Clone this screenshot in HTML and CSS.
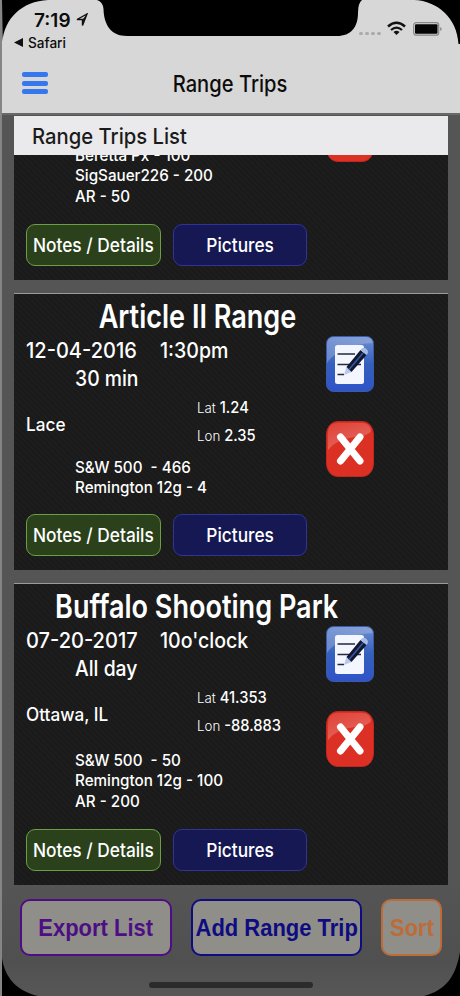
FILE: index.html
```html
<!DOCTYPE html>
<html lang="en">
<head>
    <meta charset="UTF-8">
    <meta name="viewport" content="width=device-width, initial-scale=1.0">
    <title>Range Trips</title>
    <link rel="stylesheet" href="styles.css">
</head>
<body>
    <!-- Icons shared by the cards -->
    <svg width="0" height="0" class="defs">
        <defs>
            <linearGradient id="blue" x1="0" y1="0" x2="0" y2="1">
                <stop offset="0" stop-color="#6f8fd0"/>
                <stop offset="0.5" stop-color="#3460bd"/>
                <stop offset="1" stop-color="#3053c8"/>
            </linearGradient>
            <linearGradient id="shine" x1="0" y1="0" x2="0.6" y2="1">
                <stop offset="0" stop-color="#fff" stop-opacity="0.15"/>
                <stop offset="1" stop-color="#fff" stop-opacity="0.5"/>
            </linearGradient>
        </defs>
        <symbol id="edit" viewBox="0 0 48 56">
            <rect x="0.5" y="0.5" width="47" height="55" rx="7" fill="url(#blue)" stroke="#3a5ba8"/>
            <path d="M1 27V8Q1 1 8 1H40Q46 1 47 7Q28 8 17 14Q5 20 1 27Z" fill="url(#shine)" opacity="0.6"/>
            <rect x="9" y="9" width="29" height="39" rx="2.5" fill="#f3f6ff"/>
            <path d="M11.500 18H29M11.500 28.500H25M11.500 38.500H18M31 28.500H35" stroke="#252a3c" stroke-width="1.600"/>
            <path d="M18 39L20.500 31L25.500 36Z" fill="#b9c8ef"/>
            <path d="M20.500 31L34.500 14L40.500 19L25.500 36Z" fill="#11172f"/>
            <path d="M23 33.500L37 17" stroke="#3559a8" stroke-width="1.500"/>
            <path d="M34.500 14Q37 10 40.500 13Q43.500 16 40.500 19Z" fill="#a9bbe2"/>
        </symbol>
        <symbol id="delete" viewBox="0 0 48 56">
            <rect x="0.5" y="0.5" width="47" height="55" rx="11" ry="13" fill="#dc3024" stroke="#c32820"/>
            <path d="M2 29V13Q2 2 12 2H36Q44 2 45 10Q42 15 29 16Q10 18 2 29Z" fill="url(#shine)" opacity="0.55"/>
            <path d="M14.500 16L34 40M34 16L14.500 40" stroke="#fff" stroke-width="7" stroke-linecap="round"/>
        </symbol>
    </svg>

    <div class="phone">
        <header>
            <div class="status">
                <div class="clock"><span class="time">7:19</span>
                    <svg width="12" height="14" viewBox="0 0 12 14"><path d="M1 6.500L11 1L6.500 12.500V6.500Z" fill="none" stroke="#111" stroke-width="1.400"/><path d="M11 1L6.500 6.500V12.500Z" fill="#111"/></svg>
                </div>
                <div class="back"><svg width="9" height="9" viewBox="0 0 9 9"><path d="M0 4.500L9 0V9Z" fill="#111"/></svg><span>Safari</span></div>
            </div>
            <div class="indicators">
                <i class="dot"></i><i class="dot"></i><i class="dot"></i><i class="dot"></i>
                <svg class="wifi" width="19" height="15" viewBox="0 0 19 15">
                    <path d="M1 5.500Q9.500 -2 18 5.500" fill="none" stroke="#111" stroke-width="2.500"/>
                    <path d="M4 9Q9.500 4.200 15 9" fill="none" stroke="#111" stroke-width="2.300"/>
                    <path d="M9.500 14L6.500 11Q9.500 8.600 12.500 11Z" fill="#111"/>
                </svg>
                <svg width="30" height="14" viewBox="0 0 30 14">
                    <rect x="0.7" y="0.7" width="25" height="12.500" rx="2.500" fill="none" stroke="#888" stroke-width="1.200"/>
                    <rect x="2" y="2.200" width="22.500" height="9.500" rx="1" fill="#050505"/>
                    <path d="M27.500 5Q29.500 7 27.500 9Z" fill="#555"/>
                </svg>
            </div>
            <div class="nav">
                <div class="menu"><i></i><i></i><i></i></div>
                <h1><span>Range Trips</span></h1>
            </div>
        </header>

        <h2><span>Range Trips List</span></h2>

        <div class="list">
            <div class="card tall scrolled">
                <div class="body">
                    <div class="info">
                        <div class="guns"><p>Beretta Px - 100</p><p>SigSauer226 - 200</p><p>AR - 50</p></div>
                    </div>
                    <div class="icons"><svg><use href="#delete"/></svg></div>
                </div>
                <div class="buttons">
                    <div class="btn notes"><span>Notes / Details</span></div>
                    <div class="btn pics"><span>Pictures</span></div>
                </div>
            </div>

            <div class="card">
                <h3><span>Article II Range</span></h3>
                <div class="body">
                    <div class="info">
                        <div class="when"><span class="date">12-04-2016</span><span>1:30pm</span></div>
                        <div class="length"><span>30 min</span></div>
                        <div class="where">
                            <div class="place"><span>Lace</span></div>
                            <div class="coords"><p><small>Lat</small> 1.24</p><p><small>Lon</small> 2.35</p></div>
                        </div>
                        <div class="guns"><p>S&amp;W 500&nbsp; - 466</p><p>Remington 12g - 4</p></div>
                    </div>
                    <div class="icons"><svg><use href="#edit"/></svg><svg><use href="#delete"/></svg></div>
                </div>
                <div class="buttons">
                    <div class="btn notes"><span>Notes / Details</span></div>
                    <div class="btn pics"><span>Pictures</span></div>
                </div>
            </div>

            <div class="card tall">
                <h3><span>Buffalo Shooting Park</span></h3>
                <div class="body">
                    <div class="info">
                        <div class="when"><span class="date">07-20-2017</span><span>10o'clock</span></div>
                        <div class="length"><span>All day</span></div>
                        <div class="where">
                            <div class="place"><span>Ottawa, IL</span></div>
                            <div class="coords"><p><small>Lat</small> 41.353</p><p><small>Lon</small> -88.883</p></div>
                        </div>
                        <div class="guns"><p>S&amp;W 500&nbsp; - 50</p><p>Remington 12g - 100</p><p>AR - 200</p></div>
                    </div>
                    <div class="icons"><svg><use href="#edit"/></svg><svg><use href="#delete"/></svg></div>
                </div>
                <div class="buttons">
                    <div class="btn notes"><span>Notes / Details</span></div>
                    <div class="btn pics"><span>Pictures</span></div>
                </div>
            </div>
        </div>

        <footer>
            <div class="action export"><span>Export List</span></div>
            <div class="action add"><span>Add Range Trip</span></div>
            <div class="action sort"><span>Sort</span></div>
        </footer>
        <div class="home"></div>
    </div>

    <!-- Notch and rounded corners of the phone -->
    <svg class="frame" width="460" height="996" viewBox="0 0 460 996">
        <path d="M97 0Q103 2 103.500 9C104 25 111 36 127 36H337C351 36 358 27 358 13Q358 3 362 0Z"/>
        <path d="M2 0H48C22 1 4 19 2.500 42Z"/>
        <path d="M460 0H414C438 1 457 18 458.500 44H460Z"/>
        <path d="M2 958C5 978 17 991 38 996H2Z"/>
        <path d="M460 952C456 975 447 990 424 996H460Z"/>
    </svg>
</body>
</html>
```
FILE: styles.css
```css
* {
    box-sizing: border-box;
}

body {
    margin: 0;
    background: #555;
    font-family: Inter, "Liberation Sans", sans-serif;
    font-weight: 500;
    color: #fff;
}

h1, h2, h3, p {
    margin: 0;
    font-weight: 500;
}

span, p {
    white-space: nowrap;
}

.defs {
    position: absolute;
}

.phone {
    width: 460px;
    height: 996px;
    overflow: hidden;
    border-left: 2px solid #858585;
    background: linear-gradient(#555 880px, #505050 960px, #575757);
}

/* Top bar */
header {
    position: relative;
    height: 115px;
    margin-bottom: 1px;
    background: #d7d7d7;
    border-bottom: 2px solid #686868;
    color: #0c0c0c;
}

.status {
    height: 54px;
    padding: 9px 0 0 12px;
}

.clock {
    display: flex;
    align-items: center;
    height: 22px;
    padding-left: 20px;
}

.clock svg {
    margin-left: 1px;
}

.time {
    width: 41px;
    font-size: 19px;
    font-weight: 600;
}

.back {
    display: flex;
    align-items: center;
    height: 22px;
    font-size: 14px;
}

.back span {
    margin-left: 5px;
    transform: scaleX(0.97);
    transform-origin: left;
}

.indicators {
    position: absolute;
    top: 21px;
    right: 17px;
    display: flex;
    align-items: center;
}

.dot {
    width: 4px;
    height: 3px;
    margin: 10px 2px 0 0;
    border-radius: 2px;
    background: #aaa;
}

.wifi {
    margin: 0 7px 0 4px;
}

.nav {
    height: 60px;
}

.menu {
    float: left;
    padding: 18px 0 0 20px;
}

.menu i {
    display: block;
    width: 26px;
    height: 5px;
    margin-bottom: 3.5px;
    border-radius: 2px;
    background: #3478f0;
}

h1 {
    display: flex;
    justify-content: center;
    margin: 0 2px 0 0;
    height: 60px;
    font-size: 22.5px;
    line-height: 60px;
}

h1 span {
    margin-right: 45px;
    transform: scaleX(0.895);
}

h2 {
    width: 434px;
    height: 39px;
    margin-left: 12px;
    padding-left: 18px;
    background: #eaeaec;
    color: #1b1b1b;
    font-size: 22px;
    line-height: 41px;
}

h2 span {
    display: inline-block;
    transform: scaleX(0.92);
    transform-origin: left;
}

/* Trips */
.list {
    width: 434px;
    height: 730px;
    margin-left: 12px;
    overflow: hidden;
}

.card {
    display: flex;
    flex-direction: column;
    height: 277px;
    margin-bottom: 13px;
    padding: 0 12px 14px;
    border-top: 1px solid #9a9a9a;
    background: repeating-linear-gradient(45deg, #1a1a1a 0 2px, #1d1d1d 2px 4px);
}

.tall {
    height: 302px;
}

.scrolled {
    margin-top: -177px;
}

h3 {
    display: flex;
    justify-content: center;
    width: 342px;
    height: 42px;
    font-size: 33px;
    font-weight: 600;
    line-height: 45px;
}

h3 span {
    transform: scaleX(0.82);
}

.body {
    display: flex;
}

.info {
    width: 300px;
}

.when {
    display: flex;
    font-size: 21.5px;
    line-height: 28px;
}

.when span {
    transform: scaleX(0.91);
    transform-origin: left;
}

.when .date {
    width: 134px;
    transform: scaleX(0.932);
}

.length {
    padding-left: 49px;
    font-size: 21.5px;
    line-height: 28px;
}

.length span, .place span {
    display: inline-block;
    transform: scaleX(0.9);
    transform-origin: left;
}

.where {
    display: flex;
    height: 64px;
}

.place {
    width: 171px;
    font-size: 18px;
    line-height: 65px;
}

.place span {
    transform: scaleX(0.955);
}

.coords {
    padding-top: 2px;
    font-size: 15.5px;
    line-height: 28px;
}

.coords p {
    transform: scaleX(0.95);
    transform-origin: left;
}

.coords small {
    font-size: 14px;
    font-weight: 300;
}

.guns {
    padding: 1px 0 0 49px;
    font-size: 16px;
    line-height: 20.3px;
}

.tall .guns {
    padding-top: 4px;
}

.guns p {
    transform: scaleX(0.95);
    transform-origin: left;
}

.icons {
    display: flex;
    flex-direction: column;
    gap: 29px;
}

.icons svg {
    width: 48px;
    height: 56px;
}

.scrolled .guns {
    padding-top: 166px;
}

.scrolled .icons {
    padding-top: 127px;
}

.buttons {
    display: flex;
    gap: 12px;
    margin-top: auto;
}

.btn {
    display: flex;
    justify-content: center;
    align-items: center;
    width: 134.5px;
    height: 42px;
    border: 1.5px solid;
    border-radius: 9px;
    font-size: 19px;
}

.btn span {
    transform: scaleX(0.91);
}

.notes {
    background: #2a411b;
    border-color: #6b9e45;
}

.pics {
    background: #161853;
    border-color: #30339a;
}

/* Bottom actions */
footer {
    display: flex;
    gap: 19px;
    padding: 14px 0 0 18px;
    font-family: "Liberation Sans", Arial, sans-serif;
    font-size: 24px;
    font-weight: bold;
}

.action {
    display: flex;
    justify-content: center;
    align-items: center;
    height: 57px;
    border: 2px solid;
    border-radius: 10px;
    background: #8f8e89;
}

.action span {
    transform: scaleX(0.915);
}

.export {
    width: 152px;
    color: #4d0e84;
}

.add {
    width: 171px;
    color: #0e0c80;
}

.sort {
    width: 61px;
    color: #bd6c38;
}

.home {
    width: 164px;
    height: 6px;
    margin: 26px 0 0 147px;
    border-radius: 3px;
    background: #2b2b2b;
}

.frame {
    position: absolute;
    top: 0;
    left: 0;
}
```
